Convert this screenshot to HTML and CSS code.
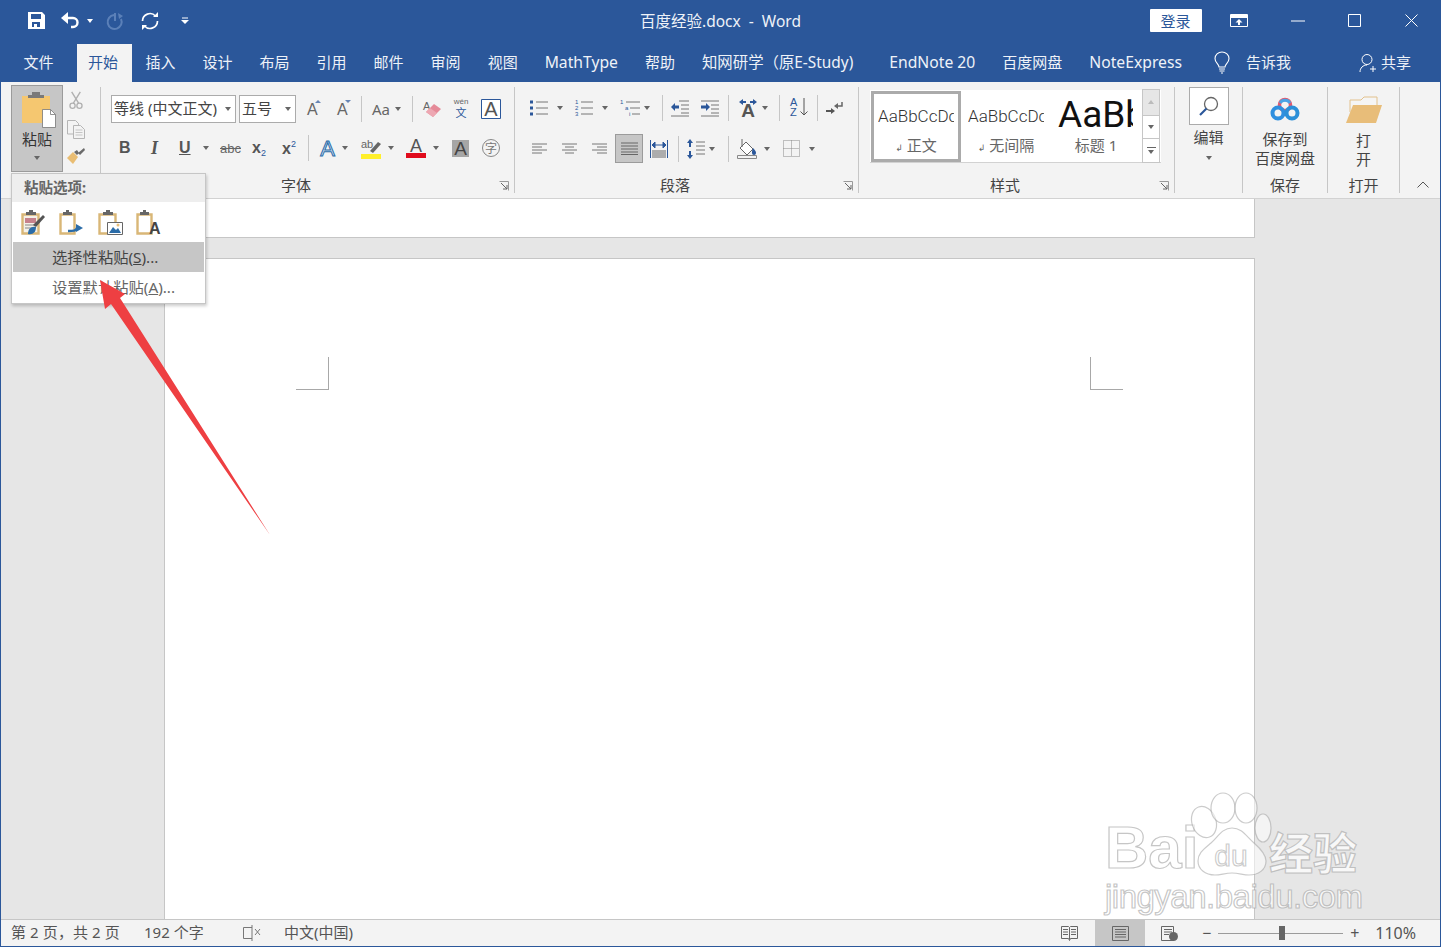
FILE: index.html
```html
<!DOCTYPE html>
<html lang="zh-CN">
<head>
<meta charset="utf-8">
<title>百度经验.docx - Word</title>
<link rel="stylesheet" href="styles.css">
</head>
<body>
<div class="app">
  <header class="titlebar">
    <div class="qat">
      <svg width="17" height="17" viewBox="0 0 17 17"><path fill="#fff" fill-rule="evenodd" d="M0 0h14l3 3v14H0zM3 2v5h10V2zM4 10v5h2v-3h3v3h3v-5z"/></svg>
      <svg width="20" height="17" viewBox="0 0 20 17"><path d="M0 6l7-6v12z" fill="#fff"/><path d="M5 6h7a4.500 4.500 0 0 1 0 9h-2" fill="none" stroke="#fff" stroke-width="2.400"/></svg>
      <i class="caret white"></i>
      <svg width="18" height="18" viewBox="0 0 18 18"><path d="M8 3a7 7 0 1 0 7 4M9 1v8" fill="none" stroke="#5b80b8" stroke-width="2"/><path d="M12 1l5 3-4 3z" fill="#5b80b8"/></svg>
      <svg width="20" height="20" viewBox="0 0 20 20"><path d="M2.500 10a7.500 7.500 0 0 1 13-5M17.500 10a7.500 7.500 0 0 1-13 5" fill="none" stroke="#fff" stroke-width="1.700"/><path d="M13 6h5V1zM7 14H2v5z" fill="#fff"/></svg>
      <svg width="8" height="8" viewBox="0 0 8 8"><path d="M1 1h6" stroke="#fff"/><path d="M0 3h8L4 7z" fill="#fff"/></svg>
    </div>
    <div class="doc-title">百度经验.docx&nbsp; - &nbsp;Word</div>
    <div class="win">
      <button class="login">登录</button>
      <span class="win-btn first"><svg width="18" height="13" viewBox="0 0 18 13"><path d="M.5.500h17v12H.5z" fill="none" stroke="#fff"/><path d="M1 1h16v3H1z" fill="#fff"/><path d="M9 5l3.500 3.500H10V11H8V8.500H5.500z" fill="#fff"/></svg></span>
      <span class="win-btn"><svg width="14" height="2" viewBox="0 0 14 2"><path d="M0 1h14" stroke="#fff"/></svg></span>
      <span class="win-btn"><svg width="13" height="13" viewBox="0 0 13 13"><path d="M.5.500h12v12H.5z" fill="none" stroke="#fff"/></svg></span>
      <span class="win-btn"><svg width="13" height="13" viewBox="0 0 13 13"><path d="M.5.500l12 12M12.500.500l-12 12" stroke="#fff" fill="none"/></svg></span>
    </div>
  </header>

  <nav class="tabs">
    <span class="tab file">文件</span>
    <span class="tab active">开始</span>
    <span class="tab">插入</span>
    <span class="tab">设计</span>
    <span class="tab">布局</span>
    <span class="tab">引用</span>
    <span class="tab">邮件</span>
    <span class="tab">审阅</span>
    <span class="tab">视图</span>
    <span class="tab lat">MathType</span>
    <span class="tab">帮助</span>
    <span class="tab wide">知网研学（原E-Study)</span>
    <span class="tab lat">EndNote 20</span>
    <span class="tab">百度网盘</span>
    <span class="tab lat">NoteExpress</span>
    <span class="tell">
      <svg width="16" height="22" viewBox="0 0 16 22"><path d="M5 15c0-3-4-4-4-8.500a7 6.500 0 0 1 14 0C15 11 11 12 11 15z" fill="none" stroke="#fff" stroke-width="1.100"/><path d="M5 17h6M5.500 19h5M7 21h2" stroke="#fff"/></svg>
      <span>告诉我</span>
    </span>
    <span class="share">
      <svg width="18" height="20" viewBox="0 0 18 20"><circle cx="8" cy="6.500" r="5" fill="none" stroke="#fff"/><path d="M1 19c0-4 3-7 7-7M11 16h6M14 13v6" fill="none" stroke="#fff"/></svg>
      <span>共享</span>
    </span>
  </nav>

  <section class="ribbon">
    <div class="group clip">
      <div class="clip-main">
        <div class="paste">
          <svg width="35" height="36" viewBox="0 0 35 36"><path d="M0 4h28v27H0z" fill="#f5c770"/><path d="M6 6V3h4V0h8v3h4v3z" fill="#7a7a7a"/><path d="M20.500 17.500h8l5 5v13h-13z" fill="#fff" stroke="#777" stroke-width=".8"/><path d="M28.500 17.500v5h5" fill="none" stroke="#777" stroke-width=".8"/></svg>
          <span>粘贴</span>
          <i class="caret"></i>
        </div>
        <div class="clip-side">
          <svg width="16" height="19" viewBox="0 0 16 22"><path d="M3 1l8 13M13 1L5 14" stroke="#b0b0b0" stroke-width="1.600" fill="none"/><circle cx="4" cy="17" r="3" fill="none" stroke="#b0b0b0" stroke-width="1.500"/><circle cx="12" cy="17" r="3" fill="none" stroke="#b0b0b0" stroke-width="1.500"/></svg>
          <svg width="18" height="19" viewBox="0 0 18 19"><path d="M.5.500h8l3 3V14H.5z" fill="#f3f3f3" stroke="#b5b5b5"/><path d="M6.500 5.500h7l4 4v9h-11z" fill="#f3f3f3" stroke="#b5b5b5"/><path d="M8.500 10h7M8.500 12.500h7M8.500 15h7" stroke="#c5c5c5"/></svg>
          <svg width="18" height="16" viewBox="0 0 18 16"><path d="M0 10l6-6 5 5-5 7z" fill="#e9bd73"/><path d="M7 4l3-2 2 3-2 2zM11 5l6-5 1 2-5 5z" fill="#6a6a6a"/></svg>
        </div>
      </div>
    </div>

    <div class="group font">
      <div class="row font-r1">
        <div class="select wide"><span>等线 (中文正文)</span><i class="caret"></i></div>
        <div class="select small"><span>五号</span><i class="caret"></i></div>
        <svg width="15" height="18" viewBox="0 0 15 18"><text x="0" y="15" class="ic-a">A</text><path d="M8 3l3-3 3 3z" fill="#2b579a" opacity=".7"/></svg>
        <svg width="15" height="18" viewBox="0 0 15 18"><text x="0" y="15" class="ic-a">A</text><path d="M8 0l3 3 3-3z" fill="#2b579a" opacity=".7"/></svg>
        <i class="vsep"></i>
        <span class="aa">Aa</span>
        <i class="caret"></i>
        <i class="vsep"></i>
        <svg width="19" height="18" viewBox="0 0 19 18"><text x="0" y="10" class="ic-s">A</text><path d="M3 12l8-8 7 5-8 8z" fill="#e58a98"/><path d="M3 12l4-4 7 5-4 4z" fill="#eda7b2"/></svg>
        <svg width="16" height="22" viewBox="0 0 16 22"><text x="8" y="6" class="ic-w">wén</text><text x="8" y="19" class="ic-wen">文</text></svg>
        <svg width="20" height="20" viewBox="0 0 20 20"><path d="M.5.500h19v19H.5z" fill="#fff" stroke="#2b579a"/><text x="10" y="17" class="ic-ab">A</text></svg>
      </div>
      <div class="row font-r2">
        <b class="fmt bold">B</b>
        <i class="fmt ital">I</i>
        <span class="fmt und">U</span>
        <i class="caret"></i>
        <span class="abc">abc</span>
        <span class="sub">x<small>2</small></span>
        <span class="sup">x<small>2</small></span>
        <i class="vsep"></i>
        <svg width="17" height="20" viewBox="0 0 17 20"><text x="8.500" y="18" class="ic-outline">A</text></svg>
        <i class="caret"></i>
        <svg width="20" height="21" viewBox="0 0 20 21"><text x="0" y="10" class="ic-s">ab</text><path d="M9 13l8-9 3 2-8 9z" fill="#666"/><path d="M0 16h20v5H0z" fill="#ffef2a"/></svg>
        <i class="caret"></i>
        <svg width="20" height="20" viewBox="0 0 20 20"><text x="10" y="14" class="ic-red">A</text><path d="M0 15h20v5H0z" fill="#e00b1c"/></svg>
        <i class="caret"></i>
        <svg width="17" height="17" viewBox="0 0 17 17"><path d="M0 0h17v17H0z" fill="#a6a6a6"/><text x="8.500" y="15" class="ic-grey">A</text></svg>
        <svg width="18" height="18" viewBox="0 0 18 18"><circle cx="9" cy="9" r="8.500" fill="none" stroke="#888"/><text x="9" y="14" class="ic-zi">字</text></svg>
      </div>
      <div class="label"><span>字体</span><svg class="launch" width="10" height="10" viewBox="0 0 10 10"><path d="M.5.500h9v9" fill="none" stroke="#999"/><path d="M2 2l6 6M8 4v4H4" fill="none" stroke="#666"/></svg></div>
    </div>

    <div class="group para">
      <div class="row para-r1">
        <svg width="18" height="18" viewBox="0 0 18 18"><path d="M6 3h12M6 9h12M6 15h12" stroke="#777"/><path d="M0 1.500h3v3H0zM0 7.500h3v3H0zM0 13.500h3v3H0z" fill="#2b579a"/></svg>
        <i class="caret"></i>
        <svg width="18" height="18" viewBox="0 0 18 18"><path d="M6 3h12M6 9h12M6 15h12" stroke="#777"/><text x="0" y="5" class="ic-n">1</text><text x="0" y="11" class="ic-n">2</text><text x="0" y="17" class="ic-n">3</text></svg>
        <i class="caret"></i>
        <svg width="20" height="18" viewBox="0 0 20 18"><path d="M6 3h14M10 9h10M12 15h8" stroke="#777"/><text x="0" y="5" class="ic-n">1</text><text x="5" y="11" class="ic-n">a</text><text x="9" y="17" class="ic-n">i</text></svg>
        <i class="caret"></i>
        <i class="vsep"></i>
        <svg width="18" height="17" viewBox="0 0 18 17"><path d="M8 1h10M10 5h8M10 9h8M10 13h8M0 16h18" stroke="#777"/><path d="M0 7l4-4v2.500h4v3H4V11z" fill="#2b579a"/></svg>
        <svg width="18" height="17" viewBox="0 0 18 17"><path d="M0 1h18M10 5h8M10 9h8M10 13h8M0 16h18" stroke="#777"/><path d="M9 7L5 3v2.500H0v3h5V11z" fill="#2b579a"/></svg>
        <i class="vsep"></i>
        <svg width="20" height="18" viewBox="0 0 20 18"><text x="10" y="18" class="ic-sa">A</text><path d="M1 3l4-3v2h3v2H5v2zM19 3l-4-3v2h-3v2h3v2z" fill="#2b579a"/></svg>
        <i class="caret"></i>
        <i class="vsep"></i>
        <svg width="18" height="22" viewBox="0 0 18 22"><text x="0" y="9" class="ic-az">A</text><text x="0" y="19" class="ic-az">Z</text><path d="M14 1v17M10.500 14.500L14 18l3.500-3.500" fill="none" stroke="#555"/></svg>
        <i class="vsep"></i>
        <svg width="17" height="14" viewBox="0 0 17 14"><path d="M16 1v4h-6" fill="none" stroke="#666" stroke-width="1.500"/><path d="M12 2L8 5l4 3z" fill="#666"/><path d="M0 10h5" stroke="#555" stroke-width="2"/><path d="M5 7l4 3-4 3z" fill="#555"/></svg>
      </div>
      <div class="row para-r2">
        <svg width="15" height="12" viewBox="0 0 15 12"><path d="M0 1h15M0 4h10M0 7h15M0 10h10" stroke="#777"/></svg>
        <svg width="15" height="12" viewBox="0 0 15 12"><path d="M0 1h15M3 4h9M0 7h15M3 10h9" stroke="#777"/></svg>
        <svg width="15" height="12" viewBox="0 0 15 12"><path d="M0 1h15M5 4h10M0 7h15M5 10h10" stroke="#777"/></svg>
        <div class="justify"><svg width="17" height="13" viewBox="0 0 17 13"><path d="M0 1h17M0 4h17M0 7h17M0 10h17M0 12.500h17" stroke="#666"/></svg></div>
        <svg width="18" height="18" viewBox="0 0 18 18"><path d="M.5 0v18M17.500 0v18" stroke="#2b579a"/><path d="M2 11h14M2 13h14M2 15h14M2 17h14" stroke="#666"/><path d="M3 5h12M2 5l3-3v6zM16 5l-3-3v6z" fill="#2b579a" stroke="#2b579a"/></svg>
        <i class="vsep"></i>
        <svg width="18" height="20" viewBox="0 0 18 20"><path d="M9 3h9M9 7h9M9 11h9M9 15h9" stroke="#777"/><path d="M3 0l3 4H4v4H2V4H0zM3 20l3-4H4v-4H2v4H0z" fill="#2b579a"/></svg>
        <i class="caret"></i>
        <i class="vsep"></i>
        <svg width="20" height="20" viewBox="0 0 20 20"><path d="M.5 16.500h19v3H.5z" fill="#f3f3f3" stroke="#888"/><path d="M9 3l7 7-6 6-7-7z" fill="#fff" stroke="#666"/><path d="M5 0v8" stroke="#666"/><path d="M16 9c2 2 3 3.500 3 5a2 2 0 0 1-4 0c0-1.500 0-3 1-5z" fill="#2b579a"/></svg>
        <i class="caret"></i>
        <svg width="17" height="17" viewBox="0 0 17 17"><path d="M.5.500h16v16H.5zM8.500.500v16M.5 8.500h16" fill="none" stroke="#888" stroke-dasharray="1 1"/></svg>
        <i class="caret"></i>
      </div>
      <div class="label"><span>段落</span><svg class="launch" width="10" height="10" viewBox="0 0 10 10"><path d="M.5.500h9v9" fill="none" stroke="#999"/><path d="M2 2l6 6M8 4v4H4" fill="none" stroke="#666"/></svg></div>
    </div>

    <div class="group styles">
      <div class="gallery">
        <div class="style-item selected"><div class="preview">AaBbCcDc</div><div class="style-name"><em>↲</em> 正文</div></div>
        <div class="style-item"><div class="preview">AaBbCcDc</div><div class="style-name"><em>↲</em> 无间隔</div></div>
        <div class="style-item heading"><div class="preview">AaBbCc</div><div class="style-name">标题 1</div></div>
        <div class="scroll">
          <span class="seg up"><i class="caret up"></i></span>
          <span class="seg"><i class="caret"></i></span>
          <span class="seg more"><i class="bar"></i><i class="caret"></i></span>
        </div>
      </div>
      <div class="label"><span>样式</span><svg class="launch" width="10" height="10" viewBox="0 0 10 10"><path d="M.5.500h9v9" fill="none" stroke="#999"/><path d="M2 2l6 6M8 4v4H4" fill="none" stroke="#666"/></svg></div>
    </div>

    <div class="group big edit">
      <div class="find"><svg width="20" height="20" viewBox="0 0 20 20"><circle cx="12" cy="8" r="6.500" fill="#fff" stroke="#666" stroke-width="1.300"/><path d="M7.500 12.500L1 19" stroke="#2b579a" stroke-width="2.200"/></svg></div>
      <span class="big-text">编辑</span>
      <i class="caret"></i>
    </div>

    <div class="group big save">
      <svg class="big-icon" width="28" height="25" viewBox="0 0 28 25"><circle cx="14" cy="8" r="5.500" fill="none" stroke="#e05a70" stroke-width="3.500"/><circle cx="7" cy="16" r="5.500" fill="none" stroke="#2f8fdf" stroke-width="4"/><circle cx="21" cy="16" r="5.500" fill="none" stroke="#2b8fd8" stroke-width="4"/><path d="M9 6a6 6 0 0 1 10 0" fill="none" stroke="#4aa3e6" stroke-width="3"/></svg>
      <span class="big-text">保存到<br>百度网盘</span>
      <div class="label"><span>保存</span></div>
    </div>

    <div class="group big open">
      <svg class="big-icon" width="36" height="27" viewBox="0 0 36 27"><path d="M4 16V4h11l3-3h13v8" fill="#f5f5f5" stroke="#e2c18c"/><path d="M7 9h29l-6 18H0z" fill="#e8bd79"/></svg>
      <span class="big-text">打<br>开</span>
      <div class="label"><span>打开</span></div>
    </div>

    <div class="collapse"><svg width="12" height="7" viewBox="0 0 12 7"><path d="M.5 6.500L6 1l5.500 5.500" fill="none" stroke="#555"/></svg></div>
  </section>

  <main class="doc">
    <div class="page prev"></div>
    <div class="page current">
      <i class="mark left"></i>
      <i class="mark right"></i>
    </div>
  </main>

  <footer class="status">
    <span class="st s1">第 2 页，共 2 页</span>
    <span class="st s2">192 个字</span>
    <svg class="st-proof" width="18" height="16" viewBox="0 0 18 16"><path d="M9 2.500H.5v11H9M9 0v16" fill="none" stroke="#777"/><path d="M12 4l5 6M17 4l-5 6" stroke="#777"/></svg>
    <span class="st s3">中文(中国)</span>
    <div class="st-right">
      <svg width="17" height="15" viewBox="0 0 17 15"><path d="M.5.500h7l1 1 1-1h7v12h-7l-1 2-1-2h-7zM8.500 1.500v12M2 3.500h5M2 6h5M2 8.500h5M10 3.500h5M10 6h5M10 8.500h5" fill="none" stroke="#666"/></svg>
      <div class="view-on"><svg width="17" height="15" viewBox="0 0 17 15"><path d="M.5.500h16v14H.5zM3 3.500h11M3 6h11M3 8.500h11M3 11h11" fill="none" stroke="#666"/></svg></div>
      <svg width="17" height="15" viewBox="0 0 17 15"><path d="M.5.500h12v14H.5zM3 3.500h8M3 6h8M3 8.500h5" fill="none" stroke="#666"/><circle cx="12.500" cy="10.500" r="4.500" fill="#666"/></svg>
      <span class="zoom-sign minus">−</span>
      <div class="slider"><i class="thumb"></i></div>
      <span class="zoom-sign plus">+</span>
      <span class="st zoom-val">110%</span>
    </div>
  </footer>

  <div class="menu">
    <div class="menu-head">粘贴选项:</div>
    <div class="menu-icons">
      <svg width="25" height="25" viewBox="0 0 25 25"><path d="M1.500 4.500h16v19h-16z" fill="#f5f1e8" stroke="#d9b777" stroke-width="2.400"/><path d="M5 5V2h3V0h4v2h3v3z" fill="#666"/><path d="M4 8h11v5H4z" fill="#c7828c"/><path d="M4 15h10M4 18h8" stroke="#888"/><path d="M12 15l10-10 2 2-9 10z" fill="#555"/><path d="M7 24c0-5 3-8 8-7 0 5-3 8-8 7z" fill="#2b6ca8"/></svg>
      <svg width="25" height="25" viewBox="0 0 25 25"><path d="M1.500 4.500h14v19h-14z" fill="#fff" stroke="#d9b777" stroke-width="2.400"/><path d="M4 5V2h3V0h3v2h3v3z" fill="#666"/><path d="M9 21c5 0 8 0 9-3" fill="none" stroke="#2b6ca8" stroke-width="2.400"/><path d="M17 14l7 4-7 4z" fill="#2b6ca8"/></svg>
      <svg width="25" height="25" viewBox="0 0 25 25"><path d="M1.500 4.500h16v19h-16z" fill="#fff" stroke="#d9b777" stroke-width="2.400"/><path d="M5 5V2h3V0h4v2h3v3z" fill="#666"/><path d="M9.500 12.500h15v12h-15z" fill="#fff" stroke="#666"/><path d="M11 23l4-6 3 3 2-2 3 5z" fill="#2b6ca8"/><circle cx="20" cy="15" r="1.500" fill="#e8bd79"/></svg>
      <svg width="25" height="25" viewBox="0 0 25 25"><path d="M1.500 4.500h14v19h-14z" fill="#fff" stroke="#d9b777" stroke-width="2.400"/><path d="M4 5V2h3V0h3v2h3v3z" fill="#666"/><text x="13" y="24" class="ic-pa">A</text></svg>
    </div>
    <div class="menu-item hot">选择性粘贴(<u>S</u>)...</div>
    <div class="menu-item">设置默认粘贴(<u>A</u>)...</div>
  </div>

  <svg class="arrow" width="175" height="262" viewBox="0 0 175 262"><path d="M5 6l25 14-5 4 150 237L16 30l-6 5z" fill="#ee3f42"/></svg>

  <div class="watermark">
    <div class="wm-top">
      <span class="wm-bai">Bai</span>
      <svg class="wm-paw" width="86" height="84" viewBox="0 0 86 84">
        <ellipse cx="14" cy="30" rx="12" ry="16" transform="rotate(-20 14 30)"/>
        <ellipse cx="33" cy="16" rx="12" ry="15"/>
        <ellipse cx="56" cy="16" rx="11" ry="15"/>
        <ellipse cx="73" cy="36" rx="8" ry="14"/>
        <path d="M42 36c10 0 14 8 22 15 8 7 12 12 12 18 0 9-8 14-17 14-6 0-10-2-17-2s-11 2-17 2c-10 0-17-6-17-14s6-12 13-18c7-6 11-15 21-15z"/>
        <text x="41" y="74" class="wm-du">du</text>
      </svg>
      <span class="wm-cn">经验</span>
    </div>
    <div class="wm-url">jingyan.baidu.com</div>
  </div>
</div>
</body>
</html>
```
FILE: styles.css
```css
*{box-sizing:border-box;margin:0;padding:0}
html,body{width:1441px;height:947px;overflow:hidden}
body{font-family:"Noto Sans","Noto Sans CJK SC",sans-serif;font-size:15px;color:#444;background:#fff}
i,em{font-style:normal}
svg{display:block;overflow:visible}
.app{position:relative;width:1441px;height:947px;display:flex;flex-direction:column;border:1px solid #2b579a;border-top:0;overflow:hidden}

.caret{display:block;width:0;height:0;border-left:3.500px solid transparent;border-right:3.500px solid transparent;border-top:4px solid #666}
.caret.white{border-top-color:#fff}
.caret.up{border-top:0;border-bottom:4px solid #bbb}
.vsep{display:block;width:1px;height:26px;background:#c6c6c6}

/* title bar */
.titlebar{height:41px;background:#2b579a;display:grid;grid-template-columns:1fr auto 1fr;align-items:center;color:#fff}
.qat{display:grid;grid-template-columns:33px 26px 19px 34px 41px 8px;align-items:center;padding:0 0 0 27px}
.doc-title{font-size:15.500px;color:#eef2f8}
.win{display:flex;align-items:center;justify-content:flex-end}
.login{width:52px;height:23px;background:#fff;border:0;border-radius:1px;color:#2b579a;font:15px "Noto Sans CJK SC",sans-serif;margin-right:6.500px;margin-left:auto}
.win-btn{width:57px;height:41px;display:flex;align-items:center;justify-content:center}
.win-btn.first{width:61px}

/* tabs */
.tabs{height:41px;background:#2b579a;display:flex;align-items:stretch;color:#eef2f8;font-size:15px;padding-left:9px}
.tab{display:flex;align-items:center;padding:0 13.500px 1px;line-height:1;height:38px;margin-top:3px;white-space:nowrap}
.tab.file{margin-right:10px}
.tab.active{background:#f3f3f3;color:#2b579a;padding:0 14px 1px 11px}
.tab.lat{font-size:15.700px}
.tab.wide{margin-right:9px;font-size:15.400px}
.tell{display:flex;align-items:center;gap:16px;margin:2px 0 0 18.500px;line-height:1}
.share{display:flex;align-items:center;gap:4px;margin:2px 0 0 68px;line-height:1}

/* ribbon */
.ribbon{height:117px;background:#f3f3f3;border-bottom:1px solid #d2d2d2;display:flex;padding-top:5px;align-items:flex-start}
.group{height:106px;border-right:1px solid #c6c6c6;display:flex;flex-direction:column;flex:none;position:relative}
.label{margin-top:auto;margin-bottom:-2px;height:20px;display:flex;align-items:center;line-height:20px}
.label span{flex:1;text-align:center}
.label span:not(:last-child){padding-right:8px}
.launch{margin-right:5px;margin-top:2px}
.row{display:grid;align-items:center;justify-items:start;height:28px}

.clip{width:100px}
.clip-main{display:flex;margin:-2px 0 0 10px}
.paste{width:52px;height:87px;background:#c6c6c6;border:1px solid #9b9b9b;display:flex;flex-direction:column;align-items:center;padding-top:6px;color:#333}
.paste svg{margin-left:5px}
.paste span{line-height:20px;margin-top:1px}
.paste .caret{margin-top:7px}
.clip-side{margin-left:3px;display:grid;grid-template-rows:30px 28px 26px;justify-items:center;align-items:center;width:20px}

.font{width:414px;padding-top:8px}
.font-r1{grid-template-columns:128px 68px 30px 24px 11px 23px 17px 11px 30px 28px 20px;padding-left:10px}
.font-r2{grid-template-columns:32px 28px 24px 17px 32px 30px 26px 11px 23px 19px 27px 18px 27px 19px 30px 20px;padding-left:18px;margin-top:11px}
.select{height:28px;background:#fff;border:1px solid #ababab;display:flex;align-items:center;justify-content:space-between;padding:0 4px 1px 2px;white-space:nowrap;line-height:1}
.select.wide{width:125px}
.select.small{width:57px}
.aa{font-size:15px;color:#666}
.fmt{font-size:16px;color:#555;line-height:1}
.bold{font-weight:700;font-family:"Liberation Sans",sans-serif}
.ital{font-family:"Liberation Serif",serif;font-style:italic;font-size:18px;font-weight:700}
.und{font-weight:700;text-decoration:underline;font-family:"Liberation Sans",sans-serif}
.abc{font-size:13px;text-decoration:line-through;color:#666;font-family:"Liberation Sans",sans-serif}
.sub,.sup{font:700 16px "Liberation Sans",sans-serif;color:#555;white-space:nowrap}
.sub small,.sup small{font-size:9px;font-weight:400;color:#2b579a}
.sub small{vertical-align:-3px}
.sup small{vertical-align:7px}

.ic-a{font:400 16px "Liberation Sans",sans-serif;fill:#666}
.ic-s{font:400 11px "Liberation Sans",sans-serif;fill:#666}
.ic-w{font:400 8px "Liberation Sans",sans-serif;fill:#666;text-anchor:middle}
.ic-wen{font:400 11px "Noto Sans CJK SC",sans-serif;fill:#2b579a;text-anchor:middle}
.ic-ab{font:400 20px "Liberation Sans",sans-serif;fill:#555;text-anchor:middle}
.ic-outline{font:400 22px "Liberation Sans",sans-serif;fill:#cfe0f3;stroke:#2b6ca8;stroke-width:1;text-anchor:middle}
.ic-red{font:400 18px "Liberation Sans",sans-serif;fill:#555;text-anchor:middle}
.ic-grey{font:400 19px "Liberation Sans",sans-serif;fill:#444;text-anchor:middle}
.ic-zi{font:400 12px "Noto Sans CJK SC",sans-serif;fill:#777;text-anchor:middle}
.ic-n{font:400 6px "Liberation Sans",sans-serif;fill:#2b579a}
.ic-sa{font:700 19px "Liberation Sans",sans-serif;fill:#555;text-anchor:middle}
.ic-az{font:400 11px "Liberation Sans",sans-serif;fill:#2b579a}
.ic-pa{font:700 16px "Liberation Sans",sans-serif;fill:#444}

.para{width:344px;padding-top:7px}
.para-r1{grid-template-columns:27px 18px 27px 18px 24px 18px 9px 30px 27px 10px 24px 17px 11px 27px 9px 18px;padding-left:15px}
.para-r2{grid-template-columns:30px 30px 23px 35px 28px 9px 22px 19px 9px 27px 19px 26px 10px;padding-left:17px;margin-top:12px}
.justify{width:28px;height:29px;background:#c6c6c6;border:1px solid #9b9b9b;display:flex;align-items:center;justify-content:center}

.styles{width:316px}
.gallery{margin:3px 0 0 11px;width:291px;height:73px;background:#fff;display:flex;border-bottom:1px solid #d2d2d2;position:relative}
.style-item{width:90px;height:72px;padding:0 7px;color:#555;flex:none}
.style-item.selected{border:3px solid #ababab;width:90px;padding:0 4px;height:71px;margin:1px 0 0 1px}
.preview{overflow:hidden;white-space:nowrap;font:300 17px/24px Roboto,sans-serif;color:#333;height:24px;margin-top:14px}
.selected .preview{margin-top:10px}
.style-name{font-size:15px;line-height:20px;text-align:center;margin-top:7px;color:#666}
.style-name em{font-size:9px;color:#666;font-family:"DejaVu Sans",sans-serif}
.heading .preview{font:400 37px/44px Roboto,sans-serif;height:40px;color:#111;margin-top:3px;margin-right:1px}
.heading .style-name{margin-top:2px}
.scroll{width:18px;margin:-1px 0 0 1px;display:flex;flex-direction:column;border:1px solid #c6c6c6;height:74px;flex:none;background:#fff}
.seg{flex:1;display:flex;flex-direction:column;gap:2px;align-items:center;justify-content:center;border-bottom:1px solid #c6c6c6}
.seg:last-child{border-bottom:0}
.seg.up{background:#e6e6e6;flex:1.100}
.bar{display:block;width:9px;height:1px;background:#666}

.big{align-items:center}
.edit{width:68px}
.save{width:85px}
.open{width:72px}
.find{width:40px;height:38px;background:#fff;border:1px solid #ababab;display:flex;align-items:center;justify-content:center}
.edit .big-text{margin-top:3px}
.edit .caret{margin-top:9px}
.big-icon{margin-top:9px}
.save .big-icon{margin-top:10px}
.big-text{line-height:19px;text-align:center;margin-top:8px}
.big .label{width:100%}
.collapse{flex:1;height:106px;display:flex;align-items:flex-end;padding:0 0 5px 17px}

/* document */
.doc{flex:1;background:#e6e6e6;padding-left:163px;display:flex;flex-direction:column;min-height:0}
.page{width:1091px;background:#fff;border:1px solid #c6c6c6}
.page.prev{height:39px;border-top:0;flex:none}
.page.current{margin-top:20px;flex:1;border-bottom:0;display:flex;justify-content:space-between;align-items:flex-start;padding:98px 131px 0}
.mark{display:block;width:33px;height:33px;border-bottom:1px solid #a8a8a8}
.mark.left{border-right:1px solid #a8a8a8}
.mark.right{border-left:1px solid #a8a8a8}

/* status */
.status{height:27px;background:#f3f3f3;border-top:1px solid #c6c6c6;display:flex;align-items:center;padding:0 0 0 10px;color:#555;flex:none;line-height:1}
.st{white-space:nowrap;margin-top:-1px}
.s1{width:133px;letter-spacing:.1px}
.s2{width:99px}
.st-proof{margin-right:23px}
.st-right{margin-left:auto;display:flex;align-items:center;height:100%}
.view-on{width:50px;height:100%;background:#c6c6c6;display:flex;align-items:center;justify-content:center;margin:0 15.500px 0 17.500px}
.zoom-sign{font-size:16px;color:#555;line-height:1}
.minus{margin-left:24.500px;width:16px}
.slider{width:125px;height:1px;background:#9b9b9b;position:relative;margin-right:7px}
.thumb{position:absolute;left:61px;top:-7px;width:6px;height:14px;background:#666}
.plus{width:25px}
.zoom-val{margin-right:24px;color:#555;font-size:16px}

/* overlays */
.menu{position:absolute;left:10px;top:173px;width:195px;height:131px;background:#fff;border:1px solid #c6c6c6;box-shadow:1px 2px 3px rgba(0,0,0,.2);padding:0 1px}
.menu-head{height:28px;margin:0 -1px;padding-left:12px;background:#eee;font-weight:700;font-size:14.500px;line-height:26px;color:#666}
.menu-icons{height:40px;display:grid;grid-template-columns:38px 39px 38px 25px;align-items:center;padding-left:8px}
.menu-item{height:30px;line-height:30px;padding-left:39px;color:#666;white-space:nowrap;font-size:15.300px}
.menu-item.hot{background:#c6c6c6;color:#444}
.arrow{position:absolute;left:94px;top:274px;pointer-events:none}

.watermark{position:absolute;left:1104px;top:792px;width:262px;pointer-events:none}
.wm-top{display:flex;align-items:flex-end;height:84px}
.wm-bai,.wm-cn,.wm-url{color:rgba(255,255,255,.75);-webkit-text-stroke:1.200px rgba(160,160,160,.6)}
.wm-bai{font:700 60px/60px "Liberation Sans",sans-serif;width:86px;margin-bottom:-2px}
.wm-paw{fill:rgba(255,255,255,.55);stroke:rgba(160,160,160,.55);stroke-width:1.200;margin-left:-1px;flex:none}
.wm-du{font:400 30px "Liberation Sans",sans-serif;text-anchor:middle}
.wm-cn{font:700 44px/50px "Noto Sans CJK SC",sans-serif;white-space:nowrap;margin-left:-7px}
.wm-url{font:400 33px/36px "Liberation Sans",sans-serif;white-space:nowrap;margin-top:3px;letter-spacing:-.5px}
```
